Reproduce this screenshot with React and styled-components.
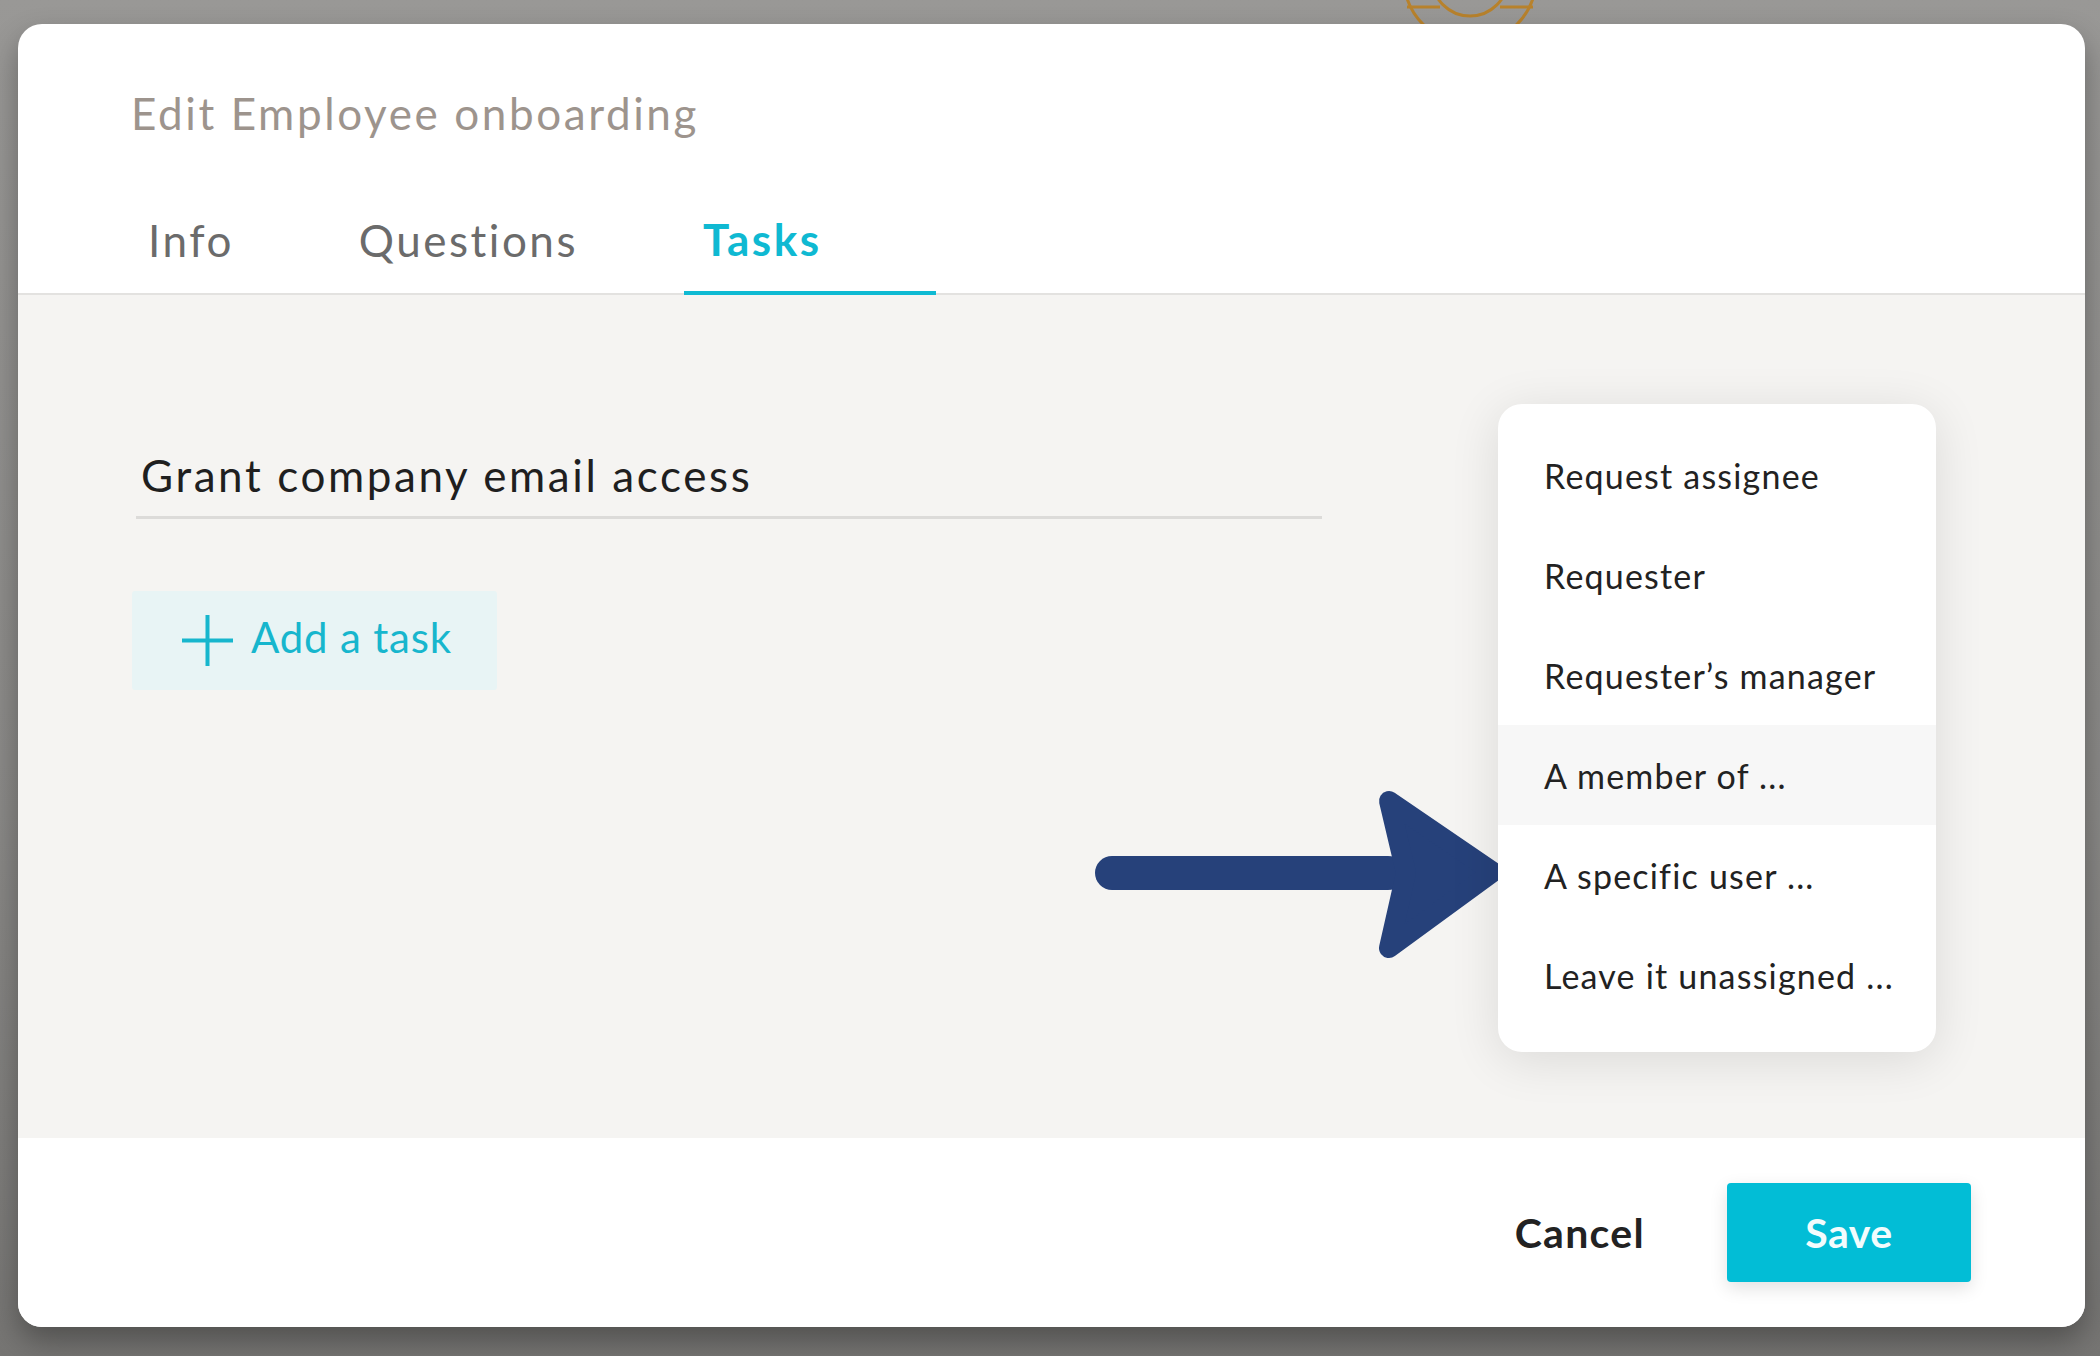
import styled, { createGlobalStyle } from "styled-components";

const GlobalStyle = createGlobalStyle`
  html, body {
    margin: 0;
    padding: 0;
  }
  body {
    font-family: Lato, "Open Sans", sans-serif;
    -webkit-font-smoothing: antialiased;
  }
  * {
    box-sizing: border-box;
  }
`;

const Backdrop = styled.div`
  position: relative;
  width: 2100px;
  height: 1356px;
  overflow: hidden;
  padding: 24px 0 0 18px;
  background: linear-gradient(180deg, #999896 0%, #8a8987 60%, #767573 100%);
`;

/* part of the page behind the overlay, peeking out above the modal */
const BehindIcon = styled.svg`
  position: absolute;
  left: 1395px;
  top: 0;
`;

const Modal = styled.div`
  position: relative;
  width: 2067px;
  height: 1303px;
  display: flex;
  flex-direction: column;
  background: #fff;
  border-radius: 24px;
  overflow: hidden;
  box-shadow: 0 14px 30px rgba(0, 0, 0, 0.32);
`;

const Header = styled.div`
  padding: 59px 0 0 113px;
  border-bottom: 2px solid #e3e2e0;
`;

const Title = styled.h1`
  margin: 0;
  font-size: 44px;
  line-height: 60px;
  font-weight: 400;
  letter-spacing: 2.6px;
  color: #9d948d;
`;

const Tabs = styled.div`
  display: flex;
  margin-top: 67px;
  margin-left: -2px;
`;

const Tab = styled.div`
  padding: 0 ${(p) => (p.active ? 114 : 106)}px ${(p) => (p.active ? 23 : 21)}px 19px;
  font-size: 44px;
  line-height: ${(p) => (p.active ? 58 : 60)}px;
  letter-spacing: 2.5px;
  font-weight: ${(p) => (p.active ? 700 : 400)};
  color: ${(p) => (p.active ? "#0fb9d2" : "#6b6b6b")};
  border-bottom: 4px solid ${(p) => (p.active ? "#0fbad3" : "transparent")};
  margin-bottom: -2px;
`;

const Body = styled.div`
  position: relative;
  flex: 1;
  background: #f5f4f2;
  padding: 150px 0 0 114px;
`;

const TaskField = styled.div`
  width: 1186px;
  margin-left: 4px;
  padding: 0 0 11px 5px;
  font-size: 44px;
  line-height: 60px;
  letter-spacing: 2.6px;
  color: #1f1f1f;
  border-bottom: 3px solid #dcdbd9;
`;

const AddButton = styled.div`
  display: inline-flex;
  align-items: center;
  gap: 18px;
  margin-top: 72px;
  height: 99px;
  padding: 0 45px 0 50px;
  background: #e8f4f5;
  border-radius: 3px;
  font-size: 42px;
  letter-spacing: 0.8px;
  color: #17b6cd;
`;

const AddLabel = styled.span`
  padding-bottom: 8px;
`;

const Menu = styled.div`
  position: absolute;
  left: 1480px;
  top: 109px;
  width: 438px;
  height: 648px;
  padding: 21px 0 0;
  background: #fff;
  border-radius: 24px;
  box-shadow: 0 8px 50px rgba(0, 0, 0, 0.11);
`;

const MenuItem = styled.div`
  height: 100px;
  display: flex;
  align-items: center;
  padding: 0 0 0 46px;
  font-size: 34px;
  letter-spacing: 1.2px;
  color: #222;
  background: ${(p) => (p.hover ? "#f7f7f7" : "transparent")};
`;

/* annotation arrow drawn over the screenshot */
const Arrow = styled.svg`
  position: absolute;
  left: 1072px;
  top: 493px;
`;

const Footer = styled.div`
  height: 189px;
  display: flex;
  align-items: center;
  justify-content: flex-end;
  gap: 82px;
  padding-right: 114px;
  background: #fff;
`;

const CancelButton = styled.div`
  font-size: 41px;
  font-weight: 700;
  letter-spacing: 1.3px;
  color: #222;
`;

const SaveButton = styled.div`
  width: 244px;
  height: 99px;
  display: flex;
  align-items: center;
  justify-content: center;
  background: #02bdd6;
  border-radius: 4px;
  font-size: 41px;
  font-weight: 700;
  letter-spacing: 0.5px;
  color: #f2fcfd;
  box-shadow: 0 6px 18px rgba(0, 0, 0, 0.12);
`;

const options = [
  "Request assignee",
  "Requester",
  "Requester’s manager",
  "A member of ...",
  "A specific user ...",
  "Leave it unassigned ...",
];

function PlusIcon() {
  return (
    <svg width="51" height="51" viewBox="0 0 51 51">
      <path d="M25.5 0 V51 M0 25.5 H51" stroke="#17b6cd" strokeWidth="4" fill="none" />
    </svg>
  );
}

export default function App() {
  return (
    <Backdrop>
      <GlobalStyle />
      <BehindIcon width="150" height="30" viewBox="0 0 150 30">
        <g fill="none" stroke="#b8822c" strokeWidth="3">
          <circle cx="75" cy="-22" r="66" />
          <circle cx="75" cy="-22" r="38" />
          <path d="M12 7 H45 M105 7 H138" />
        </g>
      </BehindIcon>
      <Modal>
        <Header>
          <Title>Edit Employee onboarding</Title>
          <Tabs>
            <Tab>Info</Tab>
            <Tab>Questions</Tab>
            <Tab active>Tasks</Tab>
          </Tabs>
        </Header>
        <Body>
          <TaskField>Grant company email access</TaskField>
          <AddButton>
            <PlusIcon />
            <AddLabel>Add a task</AddLabel>
          </AddButton>
          <Arrow width="420" height="175" viewBox="0 0 420 175">
            <g fill="#26417a" stroke="#26417a" strokeLinejoin="round">
              <rect x="5" y="68" width="310" height="34" rx="17" strokeWidth="0" />
              <path d="M299 13 L403 84 L299 160 L316 85 Z" strokeWidth="20" />
            </g>
          </Arrow>
          <Menu>
            {options.map((o, i) => (
              <MenuItem key={o} hover={i === 3}>
                {o}
              </MenuItem>
            ))}
          </Menu>
        </Body>
        <Footer>
          <CancelButton>Cancel</CancelButton>
          <SaveButton>Save</SaveButton>
        </Footer>
      </Modal>
    </Backdrop>
  );
}
